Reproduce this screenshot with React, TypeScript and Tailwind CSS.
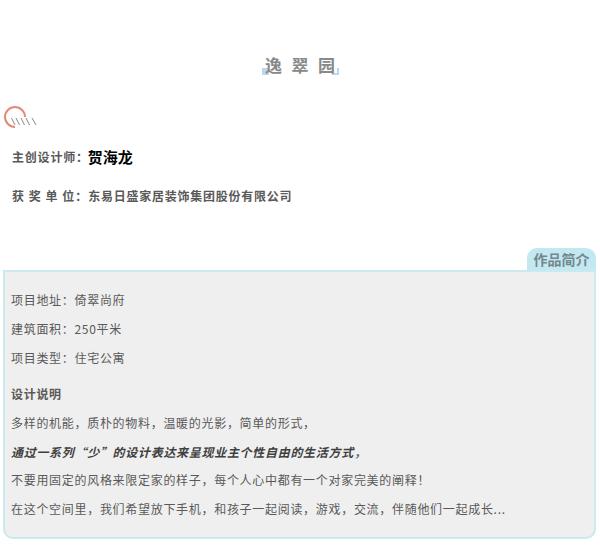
const cjk = { fontFamily: '"Noto Sans CJK SC", "Liberation Sans", sans-serif' };

function Logo() {
  return (
    <svg width="36" height="24" viewBox="0 0 36 24" fill="none">
      <path d="M22 12 A10 10 0 1 0 12 22" stroke="#e48a78" strokeWidth="2" />
      <path d="M8.500 13l3.500 7M13 13l3.500 7M18 13l3.500 7M23 13l3.500 7M29 13l4 7" stroke="#888" strokeWidth="1" />
    </svg>
  );
}

export default function App() {
  return (
    <div lang="zh-CN" className="w-[600px] h-[548px] bg-white overflow-hidden" style={cjk}>
      <div className="h-[105px] pt-[54px] flex justify-center">
        <div className="relative w-[77px] h-[21px] flex items-center justify-center">
          <div className="absolute left-0 bottom-0 w-[7px] h-[7px] bg-[#bcd6ee]" />
          <div className="absolute right-0 bottom-0 w-[7px] h-[7px] border-r-2 border-b-2 border-[#bcd6ee]" />
          <h1 className="relative text-[17px] leading-[22px] font-bold text-[#888888] tracking-[9.500px] mr-[-9.500px]">逸翠园</h1>
        </div>
      </div>
      <div className="pl-[3px] h-[25px]">
        <Logo />
      </div>
      <div className="mt-[15px] pl-[12px] flex items-center h-[24px]">
        <span className="text-[12px] font-bold text-[#595959] tracking-[0.8px]">主创设计师：</span>
        <span className="text-[15px] font-bold text-black ml-[-1px]">贺海龙</span>
      </div>
      <div className="mt-[18px] pl-[12px] flex items-center h-[18px]">
        <span className="text-[12px] font-bold text-[#595959] whitespace-pre tracking-[1px]">获 奖 单 位：</span>
        <span className="text-[12px] font-bold text-[#595959] tracking-[0.75px]">东易日盛家居装饰集团股份有限公司</span>
      </div>
      <div className="mt-[43px] flex justify-end pr-[4px]">
        <div className="w-[69px] h-[22px] bg-[#c2e8f1] rounded-t-[10px] flex items-center justify-center text-[14px] font-bold text-[#75878c]">作品简介</div>
      </div>
      <div className="ml-[3px] mr-[4px] h-[269px] bg-[#efefef] border-2 border-[#cde9f0] rounded-b-[10px] pl-[6px] text-[12px] tracking-[0.7px] text-[#595959]">
        <p className="mt-[20px] leading-[16px]">项目地址：倚翠尚府</p>
        <p className="mt-[13px] leading-[16px]">建筑面积：250平米</p>
        <p className="mt-[13px] leading-[16px]">项目类型：住宅公寓</p>
        <p className="mt-[20px] leading-[16px] font-bold">设计说明</p>
        <p className="mt-[13px] leading-[16px]">多样的机能，质朴的物料，温暖的光影，简单的形式，</p>
        <p className="mt-[13px] leading-[16px] font-bold italic text-[#3f3f3f]">通过一系列“少”的设计表达来呈现业主个性自由的生活方式<span className="text-[#5f7484]">，</span></p>
        <p className="mt-[12px] leading-[16px]">不要用固定的风格来限定家的样子，每个人心中都有一个对家完美的阐释！</p>
        <p className="mt-[13px] leading-[16px]">在这个空间里，我们希望放下手机，和孩子一起阅读，游戏，交流，伴随他们一起成长...</p>
      </div>
    </div>
  );
}
